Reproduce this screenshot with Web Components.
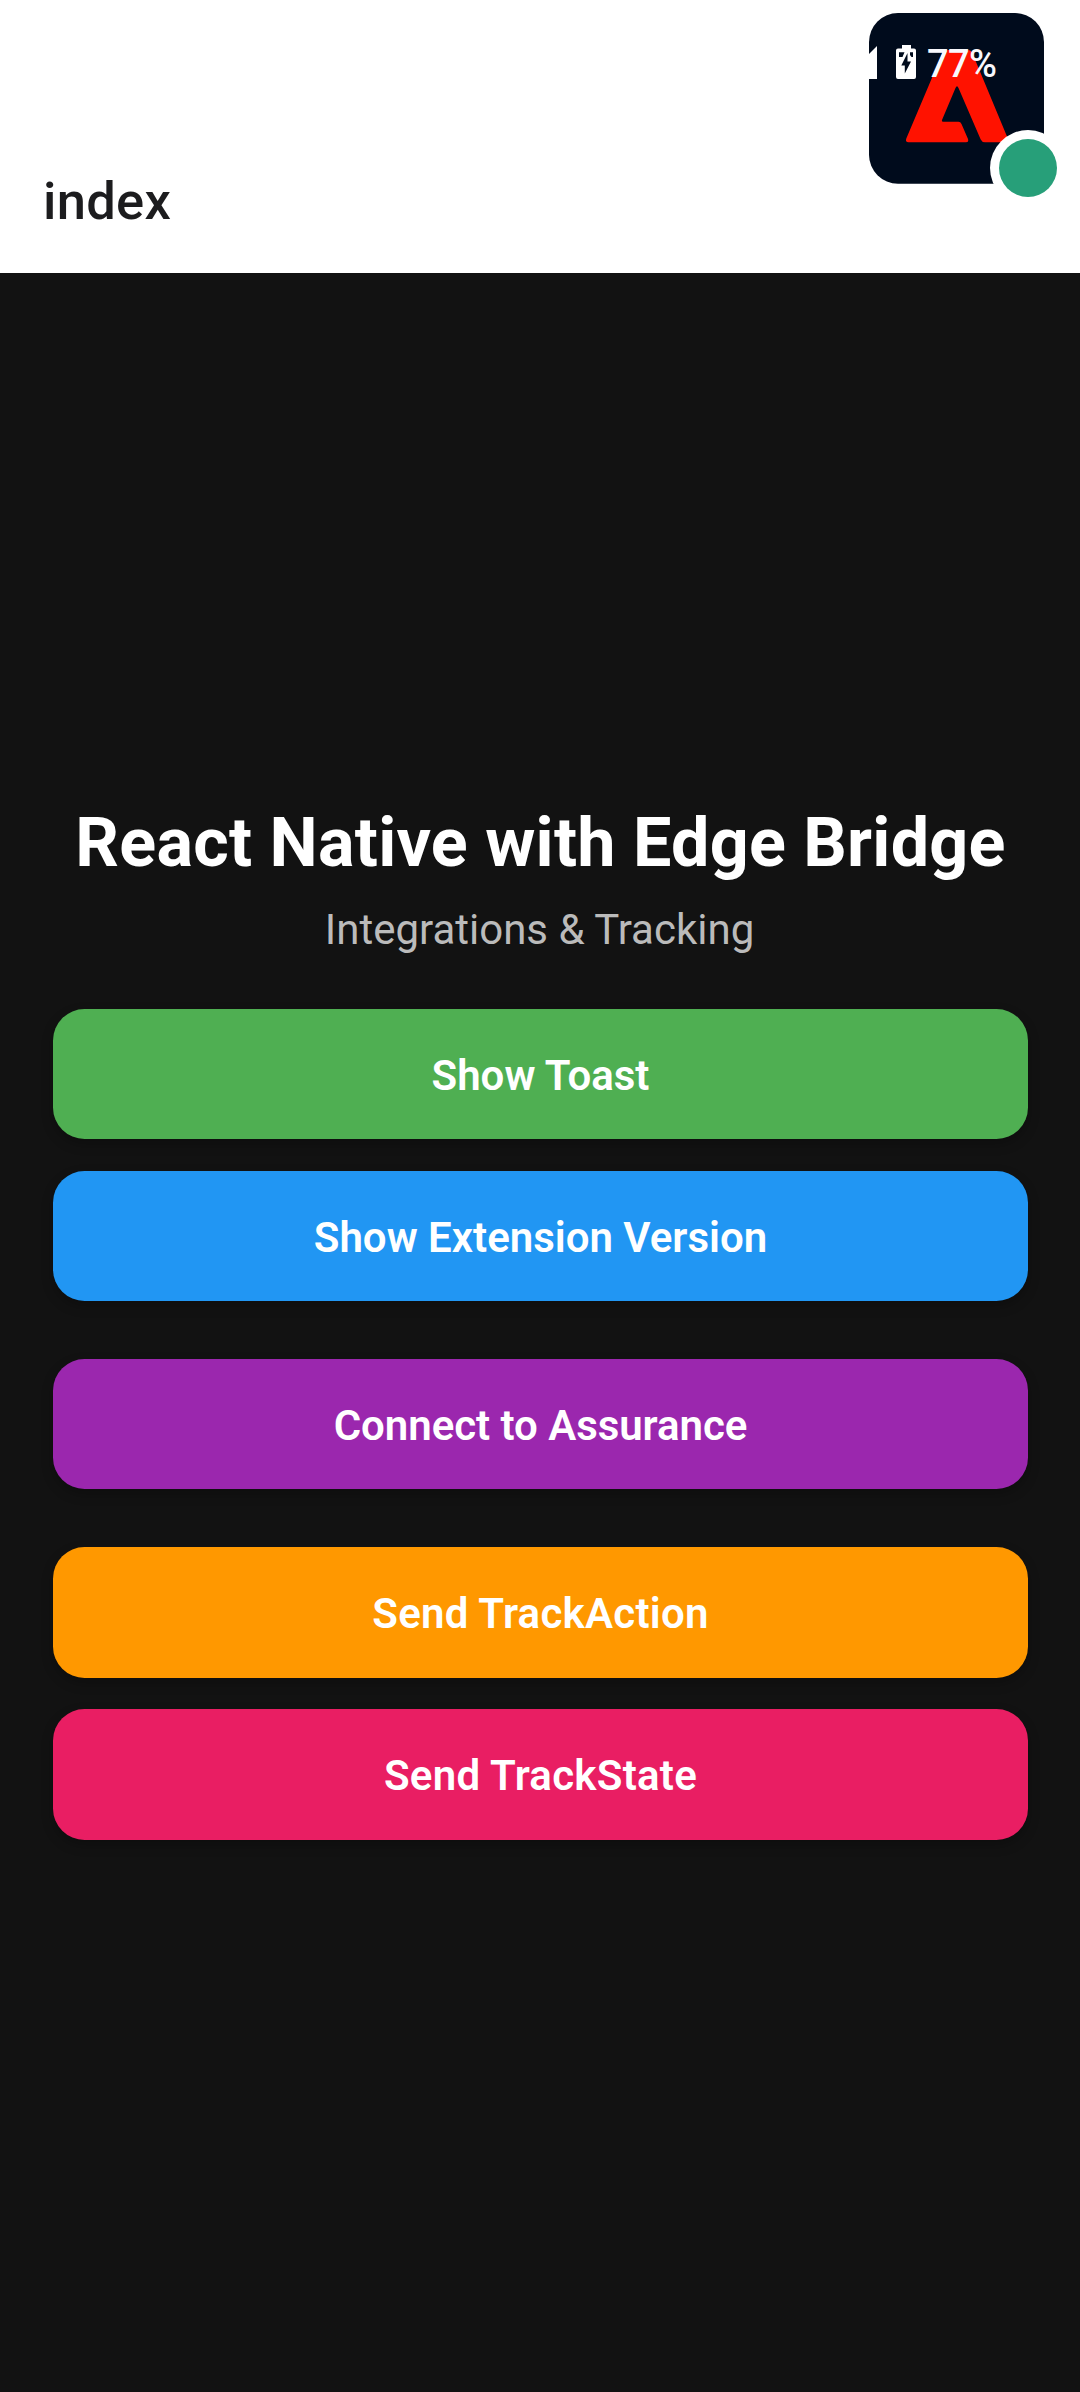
<!DOCTYPE html>
<html lang="en">
<head>
<meta charset="utf-8">
<title>index</title>
<style>
html,body{margin:0;background:#121212}
body{font-family:Roboto,"Liberation Sans",sans-serif}
</style>
</head>
<body>
<app-screen>
  <app-header slot="header">index</app-header>
  <assurance-badge slot="overlay">77%</assurance-badge>
  <page-heading>React Native with Edge Bridge<span slot="sub">Integrations &amp; Tracking</span></page-heading>
  <button-group>
    <action-button style="--fill:#4faf52">Show Toast</action-button>
    <action-button style="--fill:#2196f3">Show Extension Version</action-button>
  </button-group>
  <button-group>
    <action-button style="--fill:#9b27ae;--tracking:-.05px">Connect to Assurance</action-button>
  </button-group>
  <button-group class="tall">
    <action-button style="--fill:#ff9800;--tracking:.25px">Send TrackAction</action-button>
    <action-button style="--fill:#e91e63;--tracking:.27px">Send TrackState</action-button>
  </button-group>
</app-screen>
<script>
const define = (name, html) => customElements.define(name, class extends HTMLElement {
  constructor() {
    super();
    this.attachShadow({ mode: 'open' }).innerHTML = html;
  }
});

define('app-screen', `
<style>
:host{display:flex;flex-direction:column;width:1080px;height:2392px;position:relative;overflow:hidden;background:#121212}
main{display:flex;flex-direction:column;gap:58px;padding:530px 52px 0 53px}
</style>
<slot name="header"></slot>
<main><slot></slot></main>
<slot name="overlay"></slot>`);

define('app-header', `
<style>
:host{display:flex;height:273px;box-sizing:border-box;padding:170px 43px 0;background:#fff;color:#1c1c1e;font-size:52.5px;line-height:62px;font-weight:500;letter-spacing:.3px}
</style>
<slot></slot>`);

define('page-heading', `
<style>
:host{display:flex;flex-direction:column;align-items:center;height:206px;margin-bottom:-58px;white-space:nowrap}
h1{margin:0;font-size:68.25px;line-height:80px;font-weight:700;color:#fff;letter-spacing:.26px}
p{margin:22px 0 0;padding-right:2px;font-size:42px;line-height:49px;color:#bbb}
</style>
<h1><slot></slot></h1><p><slot name="sub"></slot></p>`);

define('button-group', `
<style>
:host{display:flex;flex-direction:column;gap:32px}
:host(.tall){--height:131px;--lift:1px;gap:31px}
</style>
<slot></slot>`);

define('action-button', `
<style>
:host{display:block}
button{display:flex;align-items:center;justify-content:center;width:100%;height:var(--height,130px);box-sizing:border-box;padding:4px 0 var(--lift,0px);border:0;border-radius:31.5px;background:var(--fill);color:#fff;font:600 42px/50px Roboto,"Liberation Sans",sans-serif;letter-spacing:var(--tracking,0px);box-shadow:0 5px 12px rgba(0,0,0,.25)}
</style>
<button type="button"><span><slot></slot></span></button>`);

define('assurance-badge', `
<style>
:host{display:block;position:absolute;left:869px;top:13px;width:211px;height:190px}
svg{display:block}
span{position:absolute;left:58px;top:29px;font-size:38px;line-height:44px;font-weight:500;color:#f8f8fc;letter-spacing:-.6px}
</style>
<svg width="211" height="190" viewBox="869 13 211 190">
  <rect x="869" y="13" width="175" height="170.7" rx="29" fill="#000b1c"/>
  <path fill="#ff1200" d="M948 50H968Q971 50 972.300 53L1007 136.500Q1009 142.300 1005 142.300H985Q982 142.300 980.700 139.500L958.500 88Q957 84.500 955.500 88L942 120Q941.300 121.700 943 121.700H958.500Q960.500 121.700 961.500 124L968 139Q969 142.300 966 142.300H908.500Q905 142.300 906.300 138.500L942.500 53Q944 50 948 50Z"/>
  <path fill="#fff" d="M869 54L877 46V79H869Z"/>
  <path fill="#fff" d="M902 45H911V48.500H914Q916 48.500 916 50.500V77Q916 79 914 79H898Q896 79 896 77V50.500Q896 48.500 898 48.500H902Z"/>
  <path fill="#000b1c" d="M899 52.200H904.500L902.500 57H899ZM910 52.200H913V57H911.500L910 55ZM907.500 53V61.500H911L904.800 73.500V65.500H901.300Z"/>
  <circle cx="1028" cy="168" r="38" fill="#fff"/>
  <circle cx="1028" cy="168" r="29" fill="#279f79"/>
</svg>
<span><slot></slot></span>`);
</script>
</body>
</html>
